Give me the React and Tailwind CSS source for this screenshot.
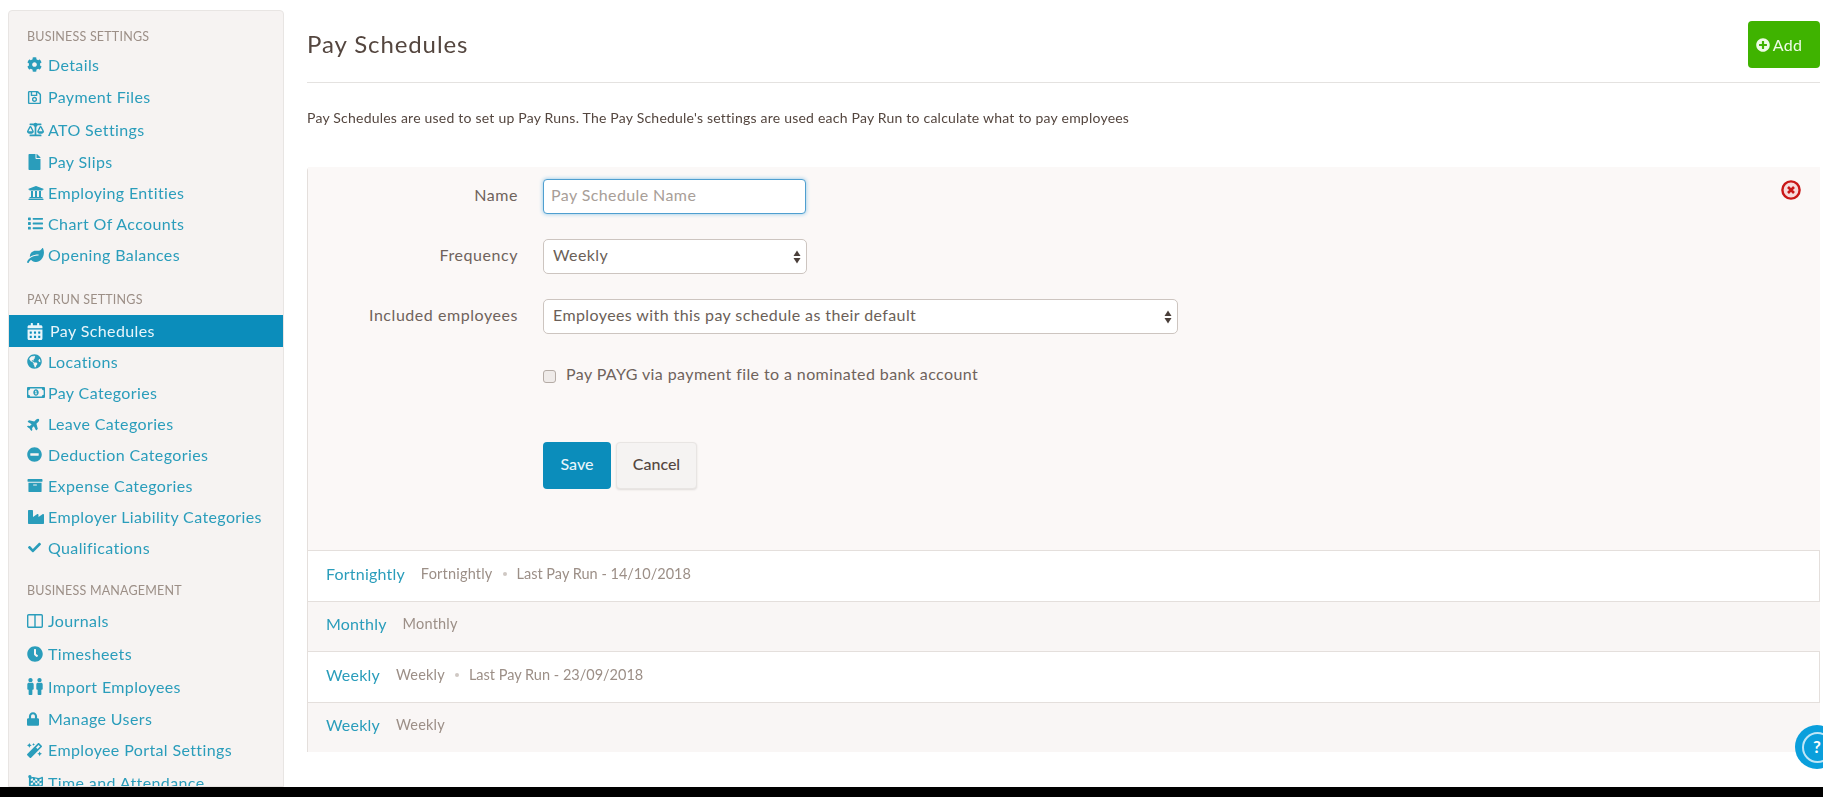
import {
    FaArchive, FaBalanceScale, FaCalendarAlt, FaCheck, FaClock, FaCog, FaFile, FaFlagCheckered,
    FaGlobeAmericas, FaIndustry, FaLeaf, FaList, FaLock, FaMagic, FaMale, FaMinusCircle, FaPlane, FaPlusCircle,
    FaRegMoneyBillAlt, FaRegSave, FaUniversity,
} from 'react-icons/fa';

const font = 'font-["Lato","Open_Sans",sans-serif]';

const Men = () => (
    <span className="flex w-[18px] -ml-[1px]">
        <FaMale className="w-[9px] h-[17px] shrink-0" />
        <FaMale className="w-[9px] h-[17px] shrink-0" />
    </span>
);

const ColumnsIcon = () => (
    <svg viewBox="0 0 16 14" className="w-[16px] h-[14px]" fill="none" stroke="currentColor" strokeWidth="1.4">
        <rect x="0.7" y="0.7" width="14.6" height="12.6" rx="1" />
        <path d="M8 1v12" />
    </svg>
);

const RemoveIcon = () => (
    <svg viewBox="0 0 20 20" className="absolute right-[19px] top-[13px] w-[20px] h-[20px]">
        <circle cx="10" cy="10" r="8.6" fill="#f7dcdc" stroke="#c91717" strokeWidth="2.4" />
        <path d="M7 7l6 6M13 7l-6 6" stroke="#c91717" strokeWidth="2.6" />
    </svg>
);

// rows in the reference aren't evenly spaced, hence the odd margin on a few items
const sections = [
    {
        title: 'BUSINESS SETTINGS',
        headClass: 'h-[22px] mb-[1px]',
        rowClass: 'h-[31.6px]',
        items: [
            { label: 'Details', icon: <FaCog className="w-[15px] h-[15px]" /> },
            { label: 'Payment Files', nudge: 'mt-[1px]', icon: <FaRegSave className="w-[15px] h-[15px]" /> },
            { label: 'ATO Settings', nudge: 'mt-[1px]', icon: <FaBalanceScale className="w-[17px] h-[15px]" /> },
            { label: 'Pay Slips', icon: <FaFile className="w-[15px] h-[16px]" /> },
            { label: 'Employing Entities', icon: <FaUniversity className="w-[18px] h-[16px]" /> },
            { label: 'Chart Of Accounts', nudge: '-mt-[1px]', icon: <FaList className="w-[17px] h-[15px]" /> },
            { label: 'Opening Balances', icon: <FaLeaf className="w-[17px] h-[15px]" /> },
        ],
    },
    {
        title: 'PAY RUN SETTINGS',
        headClass: 'h-[22px] mt-[18px] mb-[4px]',
        rowClass: 'h-[31px]',
        items: [
            { label: 'Pay Schedules', active: true, icon: <FaCalendarAlt className="w-[16px] h-[17px]" /> },
            { label: 'Locations', nudge: '-mt-[1px]', icon: <FaGlobeAmericas className="w-[15px] h-[15px]" /> },
            { label: 'Pay Categories', icon: <FaRegMoneyBillAlt className="w-[18px] h-[15px]" /> },
            { label: 'Leave Categories', icon: <FaPlane className="w-[14px] h-[14px] -rotate-45" /> },
            { label: 'Deduction Categories', icon: <FaMinusCircle className="w-[15px] h-[15px]" /> },
            { label: 'Expense Categories', icon: <FaArchive className="w-[16px] h-[15px]" /> },
            { label: 'Employer Liability Categories', icon: <FaIndustry className="w-[18px] h-[16px]" /> },
            { label: 'Qualifications', icon: <FaCheck className="w-[15px] h-[13px]" /> },
        ],
    },
    {
        title: 'BUSINESS MANAGEMENT',
        headClass: 'h-[22px] mt-[17px] mb-[3px]',
        rowClass: 'h-[32.3px]',
        items: [
            { label: 'Journals', icon: <ColumnsIcon /> },
            { label: 'Timesheets', icon: <FaClock className="w-[16px] h-[16px]" /> },
            { label: 'Import Employees', nudge: 'mt-[1px]', icon: <Men /> },
            { label: 'Manage Users', icon: <FaLock className="w-[12px] h-[14px]" /> },
            { label: 'Employee Portal Settings', nudge: '-mt-[1px]', icon: <FaMagic className="w-[15px] h-[15px]" /> },
            { label: 'Time and Attendance', icon: <FaFlagCheckered className="w-[17px] h-[15px]" /> },
        ],
    },
];

const SideItem = ({ item, rowClass }) => {
    if (item.active) {
        return (
            <div className="h-[32px] -ml-[1px] pl-[19px] flex items-center bg-[#0b8dbb] text-[#e8f5fa]">
                {item.icon}
                <span className="ml-[7px] tracking-[0.4px]">{item.label}</span>
            </div>
        );
    }
    return (
        <div className={`${rowClass} ${item.nudge || ''} pl-[18px] flex items-center text-[#2a9dbb]`}>
            <span className="w-[21px] shrink-0 flex items-center">{item.icon}</span>
            <span className="tracking-[0.38px] whitespace-nowrap">{item.label}</span>
        </div>
    );
};

const Sidebar = () => (
    <aside className="ml-[8px] mt-[10px] w-[276px] shrink-0 bg-[#f6f3f2] border border-[#e8e5e3] rounded-t-[4px] pt-[15px] text-[16px] overflow-hidden">
        {sections.map((s) => (
            <div key={s.title}>
                <div className={`${s.headClass} pl-[18px] flex items-center text-[12.5px] tracking-[0.2px] text-[#9c8f87]`}>{s.title}</div>
                {s.items.map((item) => (
                    <SideItem key={item.label} item={item} rowClass={s.rowClass} />
                ))}
            </div>
        ))}
    </aside>
);

const Arrows = () => (
    <svg viewBox="0 0 8 14" className="absolute right-[6px] top-1/2 -translate-y-1/2 w-[8px] h-[14px] text-[#4a3f3a]" fill="currentColor">
        <path d="M4 0.5 7.5 6H0.5Z" />
        <path d="M4 13.5 0.5 8H7.5Z" />
    </svg>
);

const SelectBox = ({ value, width }) => (
    <div className={`relative ${width}`}>
        <select
            defaultValue={value}
            className="appearance-none w-full h-[35px] pl-[9px] pb-[3px] bg-white border border-[#cdc5c0] rounded-[5px] text-[16px] text-[#6b5f58] tracking-[0.4px]"
        >
            <option>{value}</option>
        </select>
        <Arrows />
    </div>
);

const FormRow = ({ label, children, className }) => (
    <div className={`flex items-center ${className}`}>
        <label className="w-[210px] mr-[25px] pb-[4px] text-right text-[16px] text-[#6f635c] tracking-[0.55px]">{label}</label>
        {children}
    </div>
);

const schedules = [
    { name: 'Fortnightly', freq: 'Fortnightly', last: '14/10/2018', bg: 'bg-white border-r', h: 'h-[51px]' },
    { name: 'Monthly', freq: 'Monthly', bg: 'bg-[#f9f6f5]', h: 'h-[50px]' },
    { name: 'Weekly', freq: 'Weekly', last: '23/09/2018', bg: 'bg-white border-r', h: 'h-[51px]' },
    { name: 'Weekly', freq: 'Weekly', bg: 'bg-[#f9f6f5]', h: 'h-[50px]' },
];

const ScheduleRow = ({ row }) => (
    <div className={`${row.h} ${row.bg} border-t border-[#e4dfdc] pl-[18px] pb-[5px] flex items-center`}>
        <span className="text-[16px] tracking-[0.2px] text-[#2a9dbb] mr-[16px]">{row.name}</span>
        <span className="text-[14.5px] tracking-[0.2px] text-[#9c8f87]">{row.freq}</span>
        {row.last && (
            <>
                <span className="mx-[10px] w-[4px] h-[4px] rounded-full bg-[#cfc8c3]" />
                <span className="text-[14.5px] text-[#9c8f87]">Last Pay Run - {row.last}</span>
            </>
        )}
    </div>
);

export default function App() {
    return (
        <div className={`h-screen overflow-hidden flex flex-col bg-white ${font}`}>
            <div className="flex flex-1 min-h-0 relative blur-[0.4px]">
                <Sidebar />
                <main className="ml-[23px] mr-[3px] flex-1 min-w-0">
                    <div className="h-[83px] border-b border-[#e4e2e0] flex justify-between pt-[21px]">
                        <h1 className="text-[24px] leading-[46px] text-[#54463f] tracking-[0.9px]">Pay Schedules</h1>
                        <button className="w-[72px] h-[47px] pr-[10px] bg-[#3fb300] rounded-[4px] text-[#eefbe6] text-[16px] tracking-[0.3px] flex items-center justify-center gap-[3px]">
                            <FaPlusCircle className="w-[14px] h-[14px]" />
                            Add
                        </button>
                    </div>
                    <p className="mt-[26px] text-[14px] leading-[18px] text-[#54463f] tracking-[0.22px]">
                        Pay Schedules are used to set up Pay Runs. The Pay Schedule's settings are used each Pay Run to calculate what to pay employees
                    </p>
                    <section className="mt-[40px] border-l border-[#e4dfdc] rounded-tl-[4px]">
                        <div className="relative h-[383px] bg-[#fbf8f7] pt-[12px]">
                            <RemoveIcon />
                            <FormRow label="Name">
                                <input
                                    readOnly
                                    placeholder="Pay Schedule Name"
                                    className="w-[263px] h-[35px] pl-[7px] pb-[4px] bg-white border border-[#4f9fd0] rounded-[4px] shadow-[0_0_4px_#8cc6e6] text-[16px] tracking-[0.4px] placeholder:text-[#a89e98] outline-none"
                                />
                            </FormRow>
                            <FormRow label="Frequency" className="mt-[25px]">
                                <SelectBox value="Weekly" width="w-[264px]" />
                            </FormRow>
                            <FormRow label="Included employees" className="mt-[25px]">
                                <SelectBox value="Employees with this pay schedule as their default" width="w-[635px]" />
                            </FormRow>
                            <div className="mt-[28px] ml-[235px] flex items-center">
                                <input type="checkbox" readOnly className="w-[13px] h-[13px] appearance-none bg-[#efebe9] border border-[#b5aca6] rounded-[3px]" />
                                <span className="ml-[10px] pb-[4px] text-[16px] text-[#6f635c] tracking-[0.4px]">Pay PAYG via payment file to a nominated bank account</span>
                            </div>
                            <div className="mt-[52px] ml-[235px] flex gap-[5px]">
                                <button className="w-[68px] h-[47px] pb-[3px] bg-[#0b8dbb] rounded-[4px] text-[#e8f5fa] text-[16px] font-medium">Save</button>
                                <button className="w-[81px] h-[47px] pb-[3px] bg-[#f5f3f2] border border-[#e8e5e3] rounded-[4px] shadow-[0_1px_2px_#e0dcda] text-[#54463f] text-[16px] font-medium">Cancel</button>
                            </div>
                        </div>
                        {schedules.map((row, i) => (
                            <ScheduleRow key={i} row={row} />
                        ))}
                    </section>
                </main>
                <div className="absolute left-[1795px] top-[725px] w-[44px] h-[44px] rounded-full bg-[#0a9fdc] flex items-center justify-center">
                    <div className="w-[31px] h-[31px] rounded-full border-2 border-[#bfe6f7] flex items-center justify-center text-white text-[17px] font-bold">?</div>
                </div>
            </div>
            <div className="h-[10px] bg-black shrink-0 relative" />
        </div>
    );
}
